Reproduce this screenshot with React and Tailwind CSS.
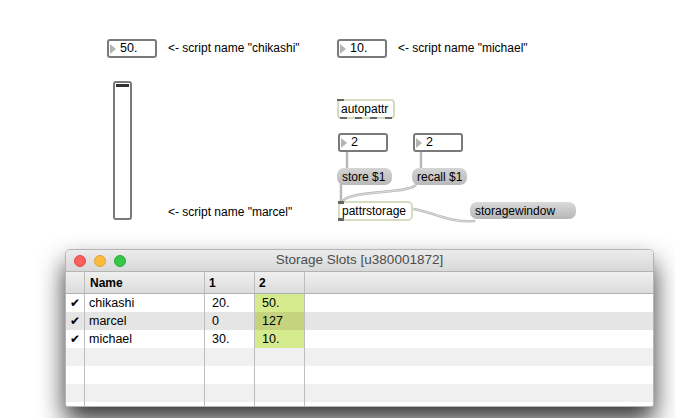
import React from 'react';

const font = { fontFamily: '"Liberation Sans", Arial, sans-serif' };

function NumberBox({ x, y, value }) {
    return (
        <div
            className="absolute flex items-center h-[19px] w-[50px] rounded-[3px] border-2 border-[#7a7a7a] bg-white"
            style={{ left: x, top: y }}
        >
            <div className="ml-[1px] w-0 h-0 border-y-[5px] border-y-transparent border-l-[6px] border-l-[#b4b4b4]"></div>
            <span className="ml-[4px] text-[12.5px] leading-none text-black">{value}</span>
        </div>
    );
}

function Comment({ x, y, text }) {
    return (
        <div className="absolute text-[12px] leading-none text-black whitespace-nowrap" style={{ left: x, top: y }}>
            {text}
        </div>
    );
}

function Message({ x, y, w, text }) {
    return (
        <div
            className="absolute flex items-center h-[17px] rounded-[7px] bg-gradient-to-b from-[#d4d4d4] to-[#b9b9b9] px-[5px] text-[12px] leading-none text-black whitespace-nowrap"
            style={{ left: x, top: y, width: w }}
        >
            {text}
        </div>
    );
}

const rows = [
    { name: 'chikashi', a: '20.', b: '50.' },
    { name: 'marcel', a: '0', b: '127' },
    { name: 'michael', a: '30.', b: '10.' },
];

export default function App() {
    const empty = [0, 1, 2, 3];
    return (
        <div className="relative w-[675px] h-[418px] overflow-hidden bg-white" style={font}>
            {/* patch cords */}
            <svg className="absolute left-0 top-0" width="675" height="418">
                <g fill="none" stroke="#b8b8b8" strokeWidth="2.5" strokeLinecap="round">
                    <path d="M347 152 L347 168" />
                    <path d="M421 152 L421 168" />
                    <path d="M341 184 L341 201" />
                    <path d="M416 184 C414 194 350 190 343 201" />
                    <path d="M474 221 C450 224 425 208 405 208" />
                </g>
                <g fill="none" stroke="#e6e6e6" strokeWidth="0.8">
                    <path d="M416 184 C414 194 350 190 343 201" />
                    <path d="M474 221 C450 224 425 208 405 208" />
                </g>
            </svg>

            {/* left column */}
            <NumberBox x={107} y={39} value="50." />
            <Comment x={168} y={42} text={'<- script name "chikashi"'} />

            <div className="absolute left-[113px] top-[81px] w-[19px] h-[139px] rounded-[3px] border-2 border-[#7a7a7a] bg-white">
                <div className="mx-[1px] mt-[1px] h-[3px] bg-[#333]"></div>
            </div>
            <Comment x={168} y={206} text={'<- script name "marcel"'} />

            {/* right column */}
            <NumberBox x={337} y={39} value="10." />
            <Comment x={398} y={42} text={'<- script name "michael"'} />

            <div className="absolute left-[337px] top-[99px] flex items-center h-[20px] w-[58px] rounded-[4px] border-2 border-[#d6dcc0] bg-white pl-[2px] text-[12px] leading-none text-black">
                autopattr
                <div className="absolute left-[-2px] top-[-2px] w-[7px] h-[2px] bg-[#666]"></div>
                <div className="absolute left-0 right-0 bottom-[-2px] flex justify-between px-[1px]">
                    <div className="w-[7px] h-[2px] bg-[#666]"></div>
                    <div className="w-[7px] h-[2px] bg-[#666]"></div>
                    <div className="w-[7px] h-[2px] bg-[#666]"></div>
                    <div className="w-[7px] h-[2px] bg-[#666]"></div>
                </div>
            </div>

            <NumberBox x={338} y={133} value="2" />
            <NumberBox x={413} y={133} value="2" />

            <Message x={337} y={168} w={55} text="store $1" />
            <Message x={412} y={168} w={55} text="recall $1" />

            <div className="absolute left-[338px] top-[201px] flex items-center h-[20px] w-[75px] rounded-[5px] border-2 border-[#d6dcc0] bg-white pl-[2px] text-[12px] leading-none text-black">
                pattrstorage
                <div className="absolute left-[-2px] top-[-2px] w-[6px] h-[3px] bg-[#666]"></div>
                <div className="absolute left-[-2px] bottom-[-2px] w-[6px] h-[3px] bg-[#666]"></div>
            </div>

            <div className="absolute left-[470px] top-[202px] flex items-center h-[17px] w-[106px] rounded-[7px] bg-gradient-to-b from-[#dadada] to-[#b7b7b7] pl-[5px] text-[12px] leading-none text-black">
                storagewindow
            </div>

            {/* storage window */}
            <div className="absolute left-[65px] top-[249px] w-[589px] h-[158px] flex flex-col overflow-hidden rounded-t-[5px] rounded-b-[3px] border border-[#b5b5b5] bg-white shadow-[0_14px_26px_rgba(0,0,0,0.8)]">
                <div className="relative flex items-center h-[22px] shrink-0 bg-gradient-to-b from-[#ececec] to-[#d8d8d8] border-b border-[#b3b3b3]">
                    <div className="flex gap-[8px] pl-[8px]">
                        <div className="w-[12px] h-[12px] rounded-full bg-[#fc605c] border border-[#de4a45]"></div>
                        <div className="w-[12px] h-[12px] rounded-full bg-[#fdbc40] border border-[#dea236]"></div>
                        <div className="w-[12px] h-[12px] rounded-full bg-[#34c84a] border border-[#27aa35]"></div>
                    </div>
                    <div className="absolute inset-0 flex items-center justify-center text-[13.5px] text-[#4d4d4d]">
                        Storage Slots [u380001872]
                    </div>
                </div>
                <div className="grid grid-cols-[19px_120px_50px_50px_1fr] h-[22px] shrink-0 bg-gradient-to-b from-[#f0f0f0] to-[#dcdcdc] border-b border-[#b0b0b0] text-[12px] font-bold text-black">
                    <div className="border-r border-[#bdbdbd]"></div>
                    <div className="border-r border-[#bdbdbd] flex items-center pl-[5px]">Name</div>
                    <div className="border-r border-[#bdbdbd] flex items-center pl-[4px]">1</div>
                    <div className="border-r border-[#bdbdbd] flex items-center pl-[4px]">2</div>
                    <div></div>
                </div>
                {rows.map((r, i) => (
                    <div
                        key={r.name}
                        className={`grid grid-cols-[19px_120px_50px_50px_1fr] h-[18px] shrink-0 text-[12.5px] text-black ${i === 1 ? 'bg-[#e5e5e5]' : 'bg-white'}`}
                    >
                        <div className="border-r border-[#bdbdbd] flex items-center justify-center text-[12px] leading-none" style={{ fontFamily: '"DejaVu Sans", sans-serif' }}>✔</div>
                        <div className="border-r border-[#bdbdbd] flex items-center pl-[4px]">{r.name}</div>
                        <div className="border-r border-[#bdbdbd] flex items-center pl-[7px]">{r.a}</div>
                        <div className={`border-r border-[#bdbdbd] flex items-center pl-[7px] ${i === 1 ? 'bg-[#c5d37e]' : 'bg-[#d6eb8d]'}`}>{r.b}</div>
                        <div></div>
                    </div>
                ))}
                {empty.map((i) => (
                    <div
                        key={i}
                        className={`grid grid-cols-[19px_120px_50px_50px_1fr] h-[18px] shrink-0 ${i % 2 === 0 ? 'bg-[#f0f0f0]' : 'bg-white'}`}
                    >
                        <div className="border-r border-[#bdbdbd]"></div>
                        <div className="border-r border-[#bdbdbd]"></div>
                        <div className="border-r border-[#bdbdbd]"></div>
                        <div className="border-r border-[#bdbdbd]"></div>
                        <div></div>
                    </div>
                ))}
            </div>
        </div>
    );
}
